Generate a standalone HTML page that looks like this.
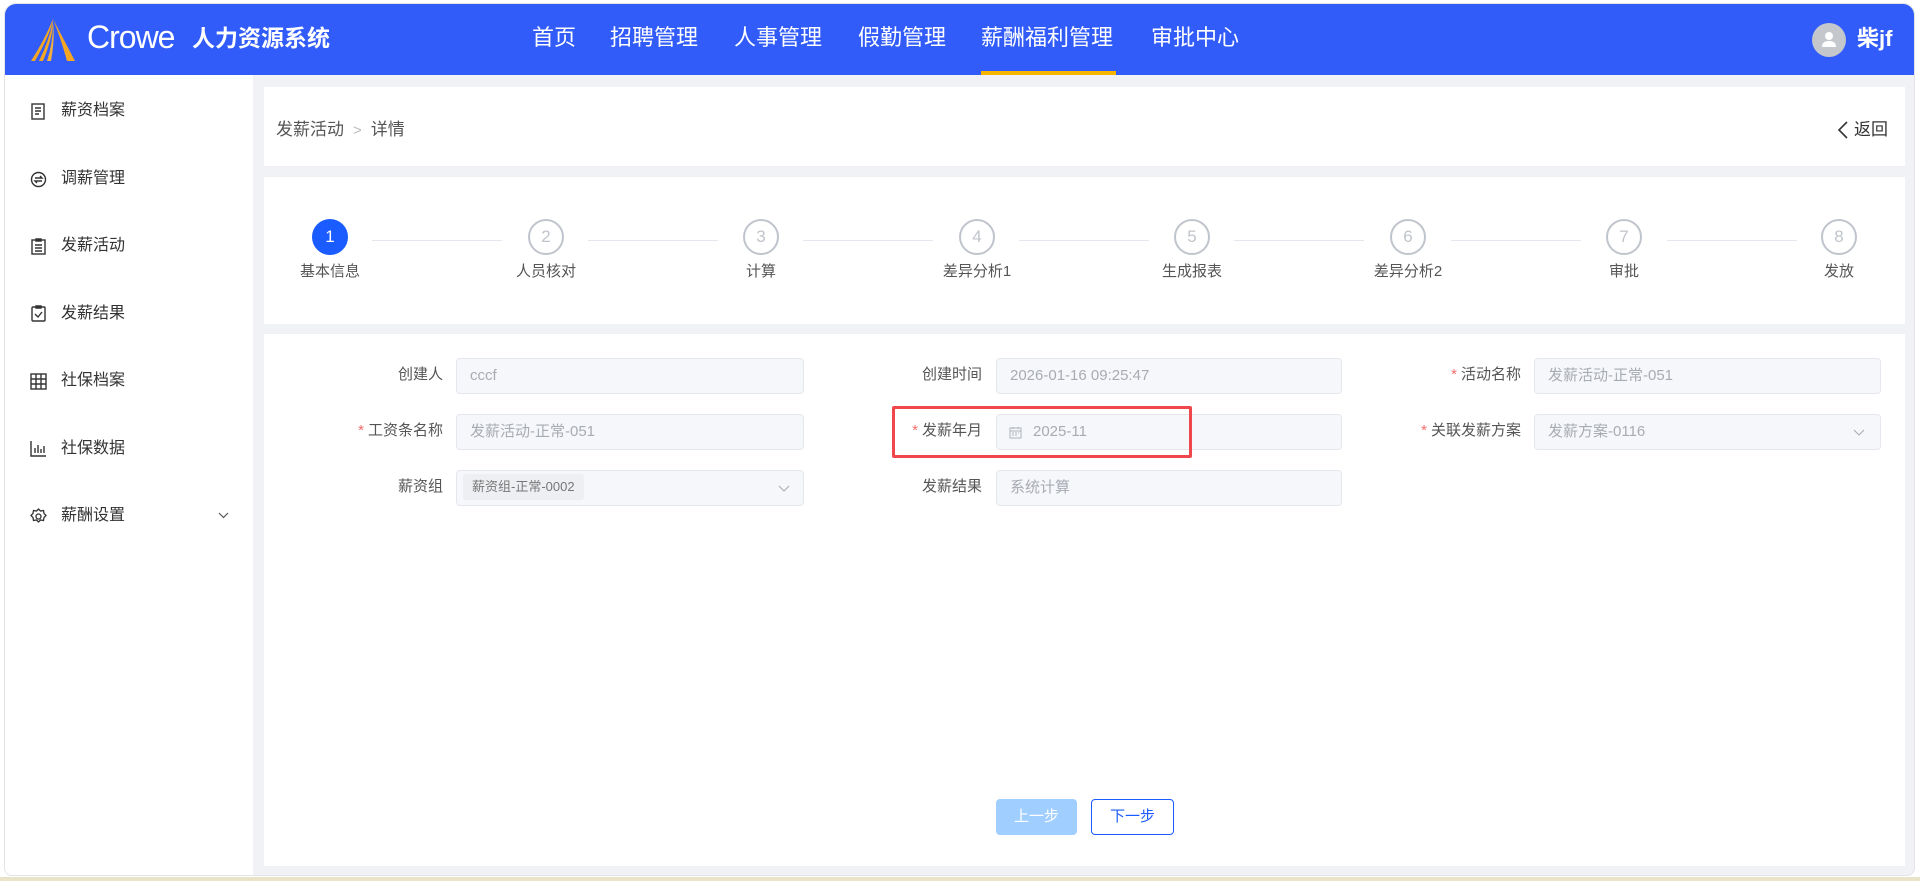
<!DOCTYPE html>
<html><head><meta charset="utf-8"><style>
*{box-sizing:border-box;margin:0;padding:0}
body{width:1920px;height:881px;background:#fff;font-family:"Liberation Sans","Noto Sans CJK SC",sans-serif;position:relative;overflow:hidden;color:#333}
.frame{position:absolute;left:4px;top:3px;width:1911px;height:873px;background:#f0f2f5;border-radius:12px 12px 8px 8px;overflow:hidden;border:1px solid #e2e4e8}
.hdr{position:absolute;left:0;top:0;width:100%;height:71px;background:#315cf9}
.abs{position:absolute}
.nav{position:absolute;top:21px;color:#fff;font-size:22px;line-height:26px;white-space:nowrap}
.side{position:absolute;left:0;top:71px;width:248px;height:802px;background:#fff}
.si{position:absolute;left:56px;font-size:16px;color:#333;line-height:20px}
.ico{position:absolute;left:25px;width:17px;height:17px}
.card{position:absolute;background:#fff}
.circ{position:absolute;width:36px;height:36px;border-radius:50%;border:2px solid #c0c4cc;color:#c0c4cc;font-size:17px;text-align:center;line-height:32px;background:#fff}
.sl{position:absolute;font-size:15px;color:#555;width:120px;text-align:center;line-height:18px}
.ln{position:absolute;height:1px;background:#e4e7ed;top:240px}
.lab{position:absolute;font-size:15px;color:#555;text-align:right;width:150px;line-height:20px}
.lab b{color:#f56c6c;font-weight:normal;margin-right:4px}
.inp{position:absolute;height:36px;background:#f5f7fa;border:1px solid #e4e7ed;border-radius:4px;color:#a8abb2;font-size:15px;line-height:34px;padding-left:13px;white-space:nowrap}
</style></head><body>
<div class="frame">
<div class="hdr">
 <svg class="abs" style="left:22px;top:15px" width="50" height="44" viewBox="0 0 50 44"><path d="M26 0 L48 42 L40 42 Q34 20 26 0Z" fill="#f5a623"/><path d="M26 0 Q24 14 8 42 L4 42 Q18 20 26 0Z" fill="#f5a623"/><path d="M26 2 Q26 18 16 42 L12 42 Q22 22 26 2Z" fill="#f5a623"/><path d="M26 4 Q28 20 24 42 L20 42 Q26 24 26 4Z" fill="#f0b040"/></svg>
 <div class="abs" style="left:82px;top:15px;color:#fff;font-size:32px;line-height:36px;letter-spacing:-1px">Crowe</div>
 <div class="abs" style="left:187px;top:20px;color:#fff;font-size:23px;font-weight:bold;line-height:28px">人力资源系统</div>
 <div class="nav" style="left:527px">首页</div>
 <div class="nav" style="left:605px">招聘管理</div>
 <div class="nav" style="left:729px">人事管理</div>
 <div class="nav" style="left:853px">假勤管理</div>
 <div class="nav" style="left:976px">薪酬福利管理</div>
 <div class="abs" style="left:976px;top:67px;width:135px;height:4px;background:#f7b500"></div>
 <div class="nav" style="left:1146px">审批中心</div>
 <div class="abs" style="left:1807px;top:19px;width:34px;height:34px;border-radius:50%;background:#c4c7cc"></div>
 <svg class="abs" style="left:1814px;top:26px" width="20" height="20" viewBox="0 0 20 20"><circle cx="10" cy="6" r="4" fill="#fff"/><path d="M3 17 Q3 11 10 11 Q17 11 17 17Z" fill="#fff"/></svg>
 <div class="abs" style="left:1852px;top:22px;color:#fff;font-size:22px;font-weight:bold;line-height:26px">柴jf</div>
</div>
<div class="side">
 <svg class="ico" style="top:28px" viewBox="0 0 17 17" fill="none" stroke="#333" stroke-width="1.4"><rect x="2" y="1" width="12" height="15"/><path d="M5 5h6M5 8h6M5 11h4"/></svg>
 <div class="si" style="top:26px">薪资档案</div>
 <svg class="ico" style="top:96px" viewBox="0 0 17 17" fill="none" stroke="#333" stroke-width="1.4"><circle cx="8.5" cy="8.5" r="7"/><path d="M5 7h7l-2-2M12 10H5l2 2"/></svg>
 <div class="si" style="top:94px">调薪管理</div>
 <svg class="ico" style="top:163px" viewBox="0 0 17 17" fill="none" stroke="#333" stroke-width="1.4"><rect x="2" y="2" width="13" height="14"/><path d="M6 1h5v2H6zM5 7h7M5 10h7M5 13h7"/></svg>
 <div class="si" style="top:161px">发薪活动</div>
 <svg class="ico" style="top:230px" viewBox="0 0 17 17" fill="none" stroke="#333" stroke-width="1.4"><rect x="2" y="2" width="13" height="14" rx="1"/><path d="M6 1h5v2H6zM5 9l3 3 4-5"/></svg>
 <div class="si" style="top:229px">发薪结果</div>
 <svg class="ico" style="top:298px" viewBox="0 0 17 17" fill="none" stroke="#333" stroke-width="1.4"><rect x="1" y="1" width="15" height="15"/><path d="M6 1v15M11 1v15M1 6h15M1 11h15"/></svg>
 <div class="si" style="top:296px">社保档案</div>
 <svg class="ico" style="top:365px" viewBox="0 0 17 17" fill="none" stroke="#333" stroke-width="1.4"><path d="M1 1v15h15M5 13V8M8 13V5M11 13V9M14 13V6"/></svg>
 <div class="si" style="top:364px">社保数据</div>
 <svg class="ico" style="top:433px" viewBox="0 0 17 17" fill="none" stroke="#333" stroke-width="1.3"><path d="M8.5 1l2 2 3-.5.5 3 2 2-2 2-.5 3-3-.5-2 2-2-2-3 .5-.5-3-2-2 2-2 .5-3 3 .5z"/><circle cx="8.5" cy="8.5" r="2.5"/></svg>
 <div class="si" style="top:431px">薪酬设置</div>
 <svg class="abs" style="left:213px;top:437px" width="11" height="7" viewBox="0 0 11 7" fill="none" stroke="#555" stroke-width="1.2"><path d="M1 1l4.5 4.5L10 1"/></svg>
</div>
<!-- breadcrumb -->
<div class="card" style="left:259px;top:83px;width:1641px;height:79px">
 <div class="abs" style="left:12px;top:33px;font-size:17px;color:#555;line-height:20px">发薪活动<span style="color:#bbb;margin:0 9px;font-size:15px">&gt;</span>详情</div>
 <svg class="abs" style="left:1573px;top:34px" width="12" height="18" viewBox="0 0 12 18" fill="none" stroke="#333" stroke-width="1.6"><path d="M10 1L2 9l8 8"/></svg>
 <div class="abs" style="left:1590px;top:33px;font-size:17px;color:#333;line-height:20px">返回</div>
</div>
<!-- steps -->
<div class="card" style="left:259px;top:173px;width:1641px;height:147px"></div>
<div class="circ" style="left:307px;top:215px;background:#1a5cff;border-color:#1a5cff;color:#fff">1</div>
<div class="sl" style="left:265px;top:259px">基本信息</div>
<div class="circ" style="left:523px;top:215px">2</div><div class="sl" style="left:481px;top:259px">人员核对</div>
<div class="circ" style="left:738px;top:215px">3</div><div class="sl" style="left:696px;top:259px">计算</div>
<div class="circ" style="left:954px;top:215px">4</div><div class="sl" style="left:912px;top:259px">差异分析1</div>
<div class="circ" style="left:1169px;top:215px">5</div><div class="sl" style="left:1127px;top:259px">生成报表</div>
<div class="circ" style="left:1385px;top:215px">6</div><div class="sl" style="left:1343px;top:259px">差异分析2</div>
<div class="circ" style="left:1601px;top:215px">7</div><div class="sl" style="left:1559px;top:259px">审批</div>
<div class="circ" style="left:1816px;top:215px">8</div><div class="sl" style="left:1774px;top:259px">发放</div>
<div class="ln" style="left:367px;width:130px;top:236px"></div>
<div class="ln" style="left:583px;width:130px;top:236px"></div>
<div class="ln" style="left:798px;width:130px;top:236px"></div>
<div class="ln" style="left:1014px;width:130px;top:236px"></div>
<div class="ln" style="left:1229px;width:130px;top:236px"></div>
<div class="ln" style="left:1446px;width:130px;top:236px"></div>
<div class="ln" style="left:1662px;width:130px;top:236px"></div>
<!-- form -->
<div class="card" style="left:259px;top:330px;width:1641px;height:532px"></div>
<div class="lab" style="left:288px;top:361px">创建人</div>
<div class="inp" style="left:451px;top:354px;width:348px">cccf</div>
<div class="lab" style="left:827px;top:361px">创建时间</div>
<div class="inp" style="left:991px;top:354px;width:346px">2026-01-16 09:25:47</div>
<div class="lab" style="left:1366px;top:361px"><b>*</b>活动名称</div>
<div class="inp" style="left:1529px;top:354px;width:347px">发薪活动-正常-051</div>

<div class="lab" style="left:288px;top:417px"><b>*</b>工资条名称</div>
<div class="inp" style="left:451px;top:410px;width:348px">发薪活动-正常-051</div>
<div class="lab" style="left:827px;top:417px"><b>*</b>发薪年月</div>
<div class="inp" style="left:991px;top:410px;width:346px;padding-left:36px">2025-11</div>
<svg class="abs" style="left:1004px;top:422px" width="13" height="13" viewBox="0 0 13 13" fill="none" stroke="#b0b3b8" stroke-width="1"><rect x="1" y="2" width="11" height="10"/><path d="M1 5h11M4 1v2M9 1v2M3 7h2M6 7h2M9 7h1M3 9h2M6 9h2"/></svg>
<div class="abs" style="left:887px;top:402px;width:300px;height:52px;border:3px solid #f0474c;border-radius:2px"></div>
<div class="lab" style="left:1366px;top:417px"><b>*</b>关联发薪方案</div>
<div class="inp" style="left:1529px;top:410px;width:347px">发薪方案-0116</div>
<svg class="abs" style="left:1848px;top:425px" width="12" height="7" viewBox="0 0 12 7" fill="none" stroke="#a8abb2" stroke-width="1.1"><path d="M1 1l5 5 5-5"/></svg>

<div class="lab" style="left:288px;top:473px">薪资组</div>
<div class="inp" style="left:451px;top:466px;width:348px;padding-left:6px"><span style="display:inline-block;background:#eeeff2;color:#777;font-size:13px;line-height:26px;padding:0 9px;border-radius:3px;vertical-align:middle;margin-top:-3px">薪资组-正常-0002</span></div>
<svg class="abs" style="left:773px;top:481px" width="12" height="7" viewBox="0 0 12 7" fill="none" stroke="#a8abb2" stroke-width="1.1"><path d="M1 1l5 5 5-5"/></svg>
<div class="lab" style="left:827px;top:473px">发薪结果</div>
<div class="inp" style="left:991px;top:466px;width:346px">系统计算</div>

<div class="abs" style="left:991px;top:795px;width:81px;height:36px;background:#a0cfff;border-radius:4px;color:#fff;font-size:15px;text-align:center;line-height:36px">上一步</div>
<div class="abs" style="left:1086px;top:795px;width:83px;height:36px;border:1px solid #1a5cff;border-radius:4px;color:#1a5cff;font-size:15px;text-align:center;line-height:34px;background:#fff">下一步</div>
</div>
<div class="abs" style="left:0;top:877px;width:1920px;height:4px;background:#e9e4c8"></div>
</body></html>
